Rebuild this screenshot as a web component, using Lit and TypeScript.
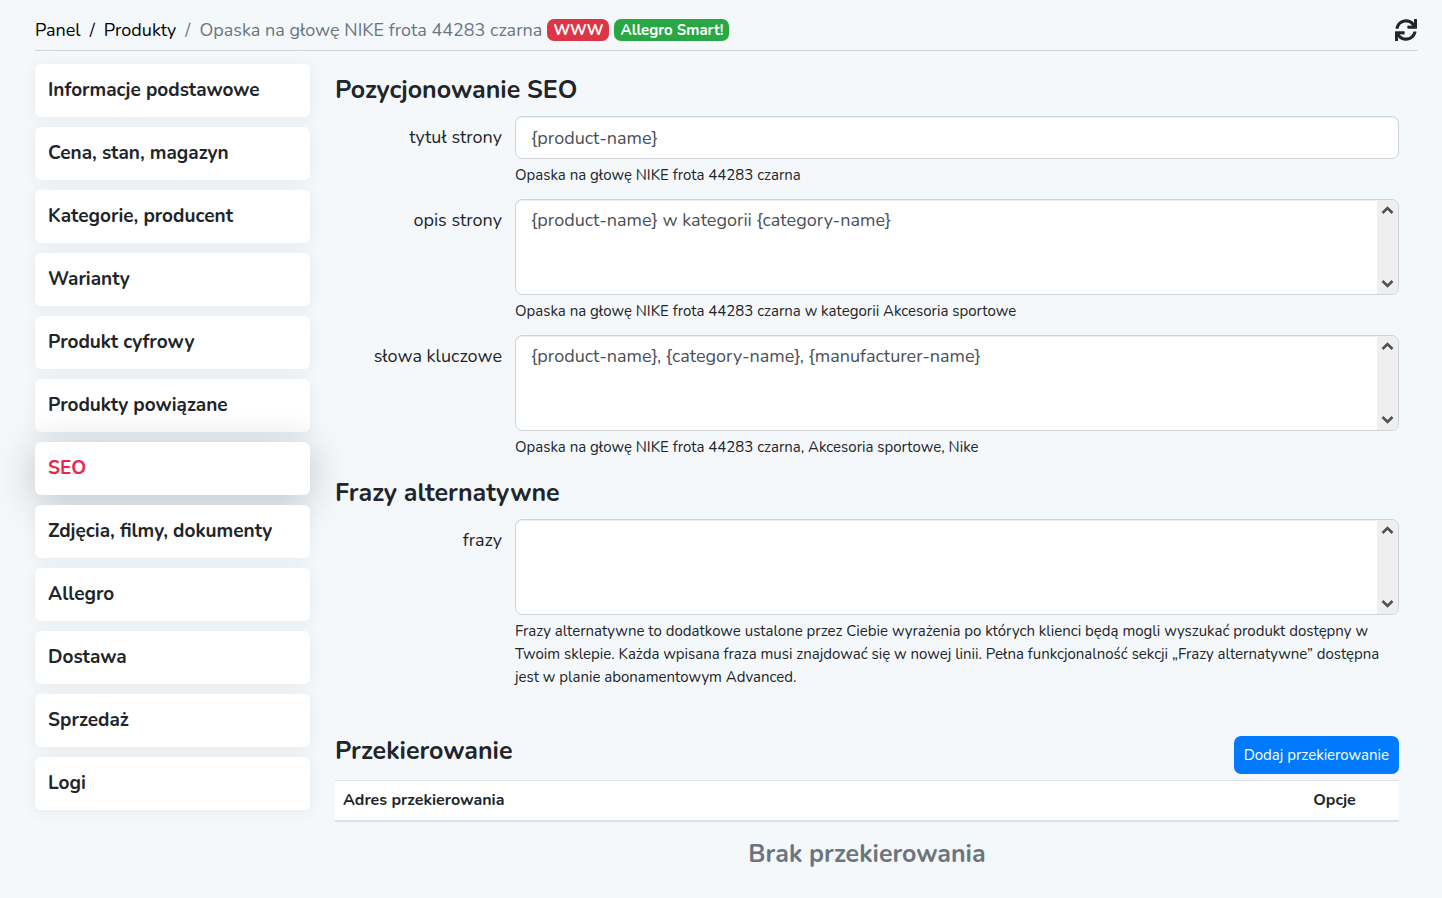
import { LitElement, html, svg, css, nothing } from "lit";
import { customElement, property, state } from "lit/decorators.js";
import { classMap } from "lit/directives/class-map.js";

const base = css`
  :host {
    display: block;
    font-family: Nunito, Lato, sans-serif;
    font-size: 18px;
    line-height: 27px;
    color: #212529;
  }
  * {
    box-sizing: border-box;
  }
`;

const SYNC_PATH =
  "M440.65 12.57l4 82.77A247.16 247.16 0 0 0 255.83 8C134.73 8 33.91 94.92 12.29 209.82A12 12 0 0 0 24.09 224h49.05a12 12 0 0 0 11.67-9.26 175.91 175.91 0 0 1 317-56.94l-101.46-4.86a12 12 0 0 0-12.57 12v47.41a12 12 0 0 0 12 12H500a12 12 0 0 0 12-12V12a12 12 0 0 0-12-12h-47.37a12 12 0 0 0-11.98 12.57zM255.83 432a175.61 175.61 0 0 1-146-77.8l101.8 4.87a12 12 0 0 0 12.57-12v-47.4a12 12 0 0 0-12-12H12a12 12 0 0 0-12 12V500a12 12 0 0 0 12 12h47.35a12 12 0 0 0 12-12.6l-4.15-82.57A247.17 247.17 0 0 0 255.83 504c121.11 0 221.93-86.92 243.55-201.82a12 12 0 0 0-11.8-14.18h-49.05a12 12 0 0 0-11.67 9.26A175.86 175.86 0 0 1 255.83 432z";

/** One labelled field: a single-line input, or a text area with its scroll rail. */
@customElement("seo-field")
class SeoField extends LitElement {
  @property() label = "";
  @property() value = "";
  @property() help = "";
  @property({ type: Boolean }) multiline = false;

  static styles = [
    base,
    css`
      .row {
        display: grid;
        grid-template-columns: 167px minmax(0, 1fr);
        column-gap: 13px;
        padding-bottom: 12px;
      }
      .label {
        padding-top: 8px;
        text-align: right;
      }
      .control {
        display: block;
        width: 100%;
        margin: 0;
        padding: 7px 15px;
        border: 1px solid #ced4da;
        border-radius: 7px;
        background: #fff;
        box-shadow: inset 0 1px 1px rgba(0, 0, 0, 0.075);
        font: inherit;
        color: #495057;
        outline: none;
      }
      .single {
        height: 43px;
      }
      .area {
        display: flex;
        height: 96px;
        padding: 0;
        overflow: hidden;
      }
      .text {
        flex: 1;
        min-width: 0;
        padding: 7px 15px;
        border: 0;
        background: transparent;
        font: inherit;
        color: inherit;
        resize: none;
        outline: none;
        scrollbar-width: none;
      }
      .control:focus,
      .area:focus-within {
        border-color: #80bdff;
      }
      .rail {
        display: flex;
        flex-direction: column;
        justify-content: space-between;
        width: 21px;
        background: #efefef;
      }
      .arrow {
        display: flex;
        align-items: center;
        justify-content: center;
        height: 20px;
        padding: 0;
        border: 0;
        background: none;
      }
      .help {
        margin: 5px 0 0;
        font-size: 15px;
        line-height: 23px;
      }
    `,
  ];

  private scroll(step: number) {
    this.renderRoot.querySelector("textarea")?.scrollBy({ top: step });
  }

  private arrow(name: string, points: string, step: number) {
    return html`<button class="arrow" type="button" tabindex="-1" aria-label=${name} @click=${() => this.scroll(step)}>
      <svg width="13" height="10" viewBox="0 0 13 10" fill="none" stroke="#505050" stroke-width="2.6" aria-hidden="true">
        ${svg`<polyline points=${points} />`}
      </svg>
    </button>`;
  }

  render() {
    return html`<div class="row">
      <label class="label" for="field">${this.label}</label>
      <div>
        ${this.multiline
          ? html`<div class="control area">
              <textarea class="text" id="field" .value=${this.value}></textarea>
              <div class="rail">
                ${this.arrow("W górę", "1.5,8 6.5,3 11.5,8", -27)} ${this.arrow("W dół", "1.5,2 6.5,7 11.5,2", 27)}
              </div>
            </div>`
          : html`<input class="control single" id="field" type="text" .value=${this.value} />`}
        ${this.help ? html`<p class="help">${this.help}</p>` : nothing}
      </div>
    </div>`;
  }
}

@customElement("app-root")
class AppRoot extends LitElement {
  @state() private active = "SEO";

  private readonly sections = [
    "Informacje podstawowe",
    "Cena, stan, magazyn",
    "Kategorie, producent",
    "Warianty",
    "Produkt cyfrowy",
    "Produkty powiązane",
    "SEO",
    "Zdjęcia, filmy, dokumenty",
    "Allegro",
    "Dostawa",
    "Sprzedaż",
    "Logi",
  ];

  static styles = [
    base,
    css`
      :host {
        min-height: 100vh;
        padding: 10px 24px 24px 35px;
        box-sizing: border-box;
        background: #f4f8fb;
      }
      .top {
        display: flex;
        align-items: center;
        justify-content: space-between;
        min-height: 41px;
        border-bottom: 1px solid #d3d6d9;
      }
      .crumbs {
        display: flex;
        flex-wrap: wrap;
        align-items: center;
        column-gap: 9px;
        color: #6c757d;
      }
      .crumb,
      .slash {
        color: #000;
        text-decoration: none;
      }
      .slash.last {
        color: #6c757d;
      }
      .current {
        display: flex;
        flex-wrap: wrap;
        align-items: center;
        column-gap: 5px;
      }
      .badge {
        padding: 0 6px;
        border-radius: 7px;
        font-size: 15px;
        line-height: 22px;
        font-weight: 700;
        color: #fff;
      }
      .red {
        background: #dc3545;
      }
      .green {
        background: #28a745;
      }
      .sync {
        display: flex;
        padding: 0;
        margin-right: 1px;
        border: 0;
        background: none;
        color: #212529;
        cursor: pointer;
      }
      .body {
        display: grid;
        grid-template-columns: 275px minmax(0, 1fr);
        column-gap: 25px;
        align-items: start;
        padding: 13px 19px 0 0;
      }
      .nav {
        display: grid;
        row-gap: 10px;
      }
      .item {
        padding: 13px;
        border-radius: 6px;
        background: #fff;
        box-shadow: 0 2px 16px rgba(0, 0, 0, 0.06);
        font-size: 19px;
        font-weight: 700;
        color: #212529;
        text-decoration: none;
      }
      .item.active {
        color: #e8274b;
        box-shadow: 0 6px 40px rgba(0, 0, 0, 0.22);
      }
      .main {
        padding-top: 4px;
      }
      .title {
        margin: 0;
        padding: 7px 0 10px;
        font-size: 25px;
        line-height: 31px;
        font-weight: 700;
      }
      .bar {
        display: flex;
        align-items: flex-start;
        justify-content: space-between;
        padding: 35px 0 6px;
      }
      .bar .title {
        padding: 0;
      }
      .add {
        padding: 0 10px;
        border: 0;
        border-radius: 7px;
        background: #007bff;
        font-family: inherit;
        font-size: 15px;
        line-height: 38px;
        color: #fff;
        cursor: pointer;
      }
      .table {
        width: 100%;
        border-spacing: 0;
      }
      .head {
        padding: 8px;
        border-top: 1px solid #dee2e6;
        border-bottom: 2px solid #dee2e6;
        background: #fff;
        font-size: 16px;
        line-height: 23px;
        font-weight: 700;
        text-align: left;
      }
      .options {
        width: 129px;
        text-align: center;
      }
      .empty {
        padding: 17px 0 0;
        font-size: 25px;
        line-height: 31px;
        font-weight: 700;
        text-align: center;
        color: #6c757d;
      }
    `,
  ];

  private select(event: Event, name: string) {
    event.preventDefault();
    this.active = name;
  }

  render() {
    return html`
      <header class="top">
        <nav class="crumbs" aria-label="Ścieżka">
          <a class="crumb" href="#">Panel</a>
          <span class="slash">/</span>
          <a class="crumb" href="#">Produkty</a>
          <span class="slash last">/</span>
          <span class="current">
            <span>Opaska na głowę NIKE frota 44283 czarna</span>
            <span class="badge red">WWW</span>
            <span class="badge green">Allegro Smart!</span>
          </span>
        </nav>
        <button class="sync" type="button" aria-label="Odśwież">
          <svg width="22" height="22" viewBox="0 0 512 512" fill="currentColor" aria-hidden="true"><path d=${SYNC_PATH} /></svg>
        </button>
      </header>
      <div class="body">
        <nav class="nav" aria-label="Sekcje produktu">
          ${this.sections.map(
            (name) => html`<a
              class=${classMap({ item: true, active: name === this.active })}
              href="#"
              @click=${(e: Event) => this.select(e, name)}
              >${name}</a
            >`
          )}
        </nav>
        <main class="main">
          <h2 class="title">Pozycjonowanie SEO</h2>
          <seo-field label="tytuł strony" value="{product-name}" help="Opaska na głowę NIKE frota 44283 czarna"></seo-field>
          <seo-field
            multiline
            label="opis strony"
            value="{product-name} w kategorii {category-name}"
            help="Opaska na głowę NIKE frota 44283 czarna w kategorii Akcesoria sportowe"
          ></seo-field>
          <seo-field
            multiline
            label="słowa kluczowe"
            value="{product-name}, {category-name}, {manufacturer-name}"
            help="Opaska na głowę NIKE frota 44283 czarna, Akcesoria sportowe, Nike"
          ></seo-field>
          <h2 class="title">Frazy alternatywne</h2>
          <seo-field
            multiline
            label="frazy"
            help="Frazy alternatywne to dodatkowe ustalone przez Ciebie wyrażenia po których klienci będą mogli wyszukać produkt dostępny w Twoim sklepie. Każda wpisana fraza musi znajdować się w nowej linii. Pełna funkcjonalność sekcji „Frazy alternatywne” dostępna jest w planie abonamentowym Advanced."
          ></seo-field>
          <div class="bar">
            <h2 class="title">Przekierowanie</h2>
            <button class="add" type="button">Dodaj przekierowanie</button>
          </div>
          <table class="table">
            <thead>
              <tr>
                <th class="head" scope="col">Adres przekierowania</th>
                <th class="head options" scope="col">Opcje</th>
              </tr>
            </thead>
            <tbody>
              <tr>
                <td class="empty" colspan="2">Brak przekierowania</td>
              </tr>
            </tbody>
          </table>
        </main>
      </div>
    `;
  }
}
